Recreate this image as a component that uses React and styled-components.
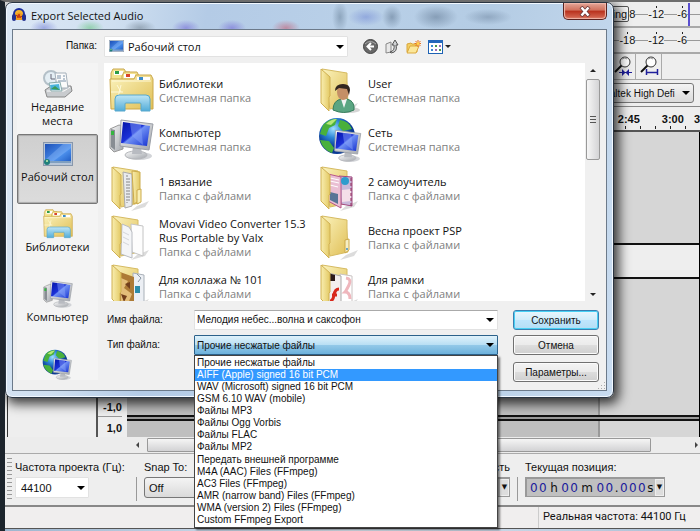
import React, { useState } from 'react'
import styled, { createGlobalStyle, css } from 'styled-components'

const GlobalStyle = createGlobalStyle`
    * {
        box-sizing: border-box;
    }
    body {
        margin: 0;
        background: #eeeeee;
        font-family: 'Liberation Sans', Arial, sans-serif;
        font-size: 11px;
        color: #111;
    }
    button, select, input {
        font: inherit;
        color: inherit;
        margin: 0;
    }
`

const segoe = css`
    font-family: 'Open Sans', 'Noto Sans', sans-serif;
    font-size: 11px;
`

/* ---------- main window ---------- */

const Desktop = styled.div`
    position: relative;
    display: flex;
    flex-direction: column;
    min-height: 100vh;
    overflow: hidden;
    border-left: 5px solid #1c242c;
    border-top: 2px solid #6d6d6d;
    background: #eeeeee;
`

const Meter = styled.div`
    position: relative;
    display: flex;
    justify-content: flex-end;
    align-items: center;
    gap: 13px;
    height: 26px;
    padding-right: 13px;
    border-bottom: 2px solid #a9a9a9;
    background: linear-gradient(#eee 12px, #999 12px, #999 13px, #eee 13px);
`

const Level = styled.span`
    display: flex;
    align-items: center;
    line-height: 16px;
    background:
        linear-gradient(#222, #222) 50% 0 / 1px 2px no-repeat,
        #eee;
`

const PeakLine = styled.i`
    position: absolute;
    right: 10px;
    top: 1px;
    bottom: 0;
    width: 2px;
    background: #5a4fd0;
`

const MeterHint = styled.span`
    padding: 0 1px;
    line-height: 14px;
    border: 1px solid #555;
    border-radius: 2px;
    background: #f6f6f6;
`

const ZoomTools = styled.div`
    display: flex;
    justify-content: flex-end;
    height: 26px;
    padding-right: 38px;
    border-bottom: 1px solid #aaa;
`

const ZoomButton = styled.button`
    width: 26px;
    padding: 2px;
    border: 0;
    border-right: 1px solid #aaa;
    background: #eee;
`

const DeviceBar = styled.div`
    display: flex;
    justify-content: flex-end;
    align-items: center;
    height: 27px;
    padding-right: 6px;
    font-size: 10px;
    border-bottom: 1px solid #888;
`

const flatSelect = css`
    appearance: none;
    outline: 0;
    border: 1px solid #777;
    border-radius: 3px;
    padding: 0 4px;
    background: linear-gradient(#f4f4f4, #dadada);
`

const Picker = styled.span`
    position: relative;
    display: flex;
    width: ${p => p.$width || '100%'};
    height: ${p => p.$height || 20}px;

    select,
    input {
        width: 100%;
        ${flatSelect}
    }
    &::after {
        content: '';
        position: absolute;
        right: 4px;
        top: calc(50% - 2px);
        border: 4px solid transparent;
        border-top-color: #000;
        border-bottom: 0;
        pointer-events: none;
    }
`

const PlainPicker = styled(Picker)`
    select,
    input {
        border: 1px solid #e2e2e2;
        border-radius: 1px;
        background: #fff;
        padding: 0 5px;
    }
`

const Ruler = styled.div`
    display: flex;
    justify-content: flex-end;
    gap: 22px;
    height: 25px;
    padding-top: 6px;
    font-size: 11px;
    font-weight: bold;
    line-height: 12px;
    border-bottom: 2px solid #555;
    background:
        repeating-linear-gradient(to right, #222 0 1px, transparent 1px 15px) 5px 19px / 100% 3px no-repeat,
        #eee;

    span:last-child {
        margin-left: -12px;
    }
`

const Tracks = styled.div`
    display: flex;
    flex: 1;
    border-right: 1px solid #000;
`

const TrackPanel = styled.div`
    width: 93px;
    border-left: 2px solid #eee;
    border-right: 2px solid #555;
    box-shadow: inset 1px 0 #333;
    background: #eee;
`

const Scale = styled.div`
    display: flex;
    flex-direction: column;
    justify-content: flex-end;
    width: 29px;
    padding-right: 5px;
    font-size: 11px;
    font-weight: bold;
    text-align: right;
    background: #eee;

    span {
        line-height: 16px;
        height: 21px;
        padding-top: 3px;
        border-top: 1px solid #999;
    }
`

const Waves = styled.div`
    display: flex;
    flex-direction: column;
    flex: 1;
`

const Channel = styled.div`
    flex: ${p => p.$grow};
    min-height: 16px;
    background: linear-gradient(
        to right,
        #bfbfbf calc(100% - 101px),
        #999 calc(100% - 101px),
        #999 calc(100% - 99px),
        #d6d6d6 calc(100% - 99px)
    );
`

const Divider = styled.div`
    height: ${p => p.$size}px;
    border: solid #111;
    border-width: 2px 0;
    background: ${p => p.$fill};
`

const HScroll = styled.div`
    display: flex;
    align-items: center;
    gap: 8px;
    height: 17px;
    padding: 0 2px 0 131px;
    border-bottom: 1px solid #aaa;
    background: #ececec;
`

const HThumb = styled.div`
    flex: 1;
    height: 14px;
    margin-right: 36px;
    border: 1px solid #999;
    border-radius: 1px;
    background: linear-gradient(#f5f5f5, #d2d2d4);
`

const BottomBar = styled.div`
    display: flex;
    gap: 7px;
    height: 53px;
    padding: 4px 0 4px 2px;
    border-bottom: 2px solid #888;
`

const Grip = styled.div`
    width: 5px;
    margin-right: -4px;
    background: repeating-linear-gradient(#999 0 1px, transparent 1px 4px);
`

const Field = styled.label`
    display: flex;
    flex-direction: column;
    gap: 3px;
    padding-top: 2px;
    line-height: 14px;
    flex: ${p => p.$flex || 'none'};
    text-align: ${p => p.$align || 'left'};
    white-space: nowrap;
`

const Split = styled.div`
    align-self: flex-end;
    height: 24px;
    border-left: 1px solid #999;
`

const TimeBox = styled.div`
    display: flex;
    align-items: center;
    justify-content: space-between;
    height: 20px;
    width: ${p => p.$width || 'auto'};
    padding-left: 3px;
    border: 2px solid #999;
    border-right-width: 1px;
    border-bottom-width: 1px;
    background: #c0c0c0;
    font-family: 'DejaVu Sans', sans-serif;
    font-size: 12px;

    b {
        font-weight: normal;
        color: #1a1a9c;
    }
    i {
        margin: 0 2px;
        font-style: normal;
    }
    button {
        align-self: stretch;
        width: 9px;
        padding: 0;
        border: 1px solid #eee;
        background: #ddd;
        font-size: 7px;
        line-height: 7px;
    }
`

const StatusBar = styled.footer`
    display: flex;
    justify-content: flex-end;
    height: 21px;
    font-family: Roboto, 'Open Sans', sans-serif;
    line-height: 20px;
    background: #f0eeee;

    span {
        width: 162px;
        padding-left: 4px;
        border-left: 1px solid #ccc;
    }
`

const WindowEdge = styled.div`
    height: 3px;
    border-top: 1px solid #555;
    background: linear-gradient(to right, #9eb6cf, #dfe9f4, #a9bdd3);
`

/* ---------- dialog ---------- */

const Dialog = styled.section`
    position: absolute;
    left: 0;
    top: 0;
    width: calc(100% - 86px);
    padding: 0 6px 6px;
    border: 1px solid #2a3542;
    border-radius: 7px;
    font-size: 10px;
    background:
        radial-gradient(ellipse 14px 8px at 38px 25px, #7f8bd8aa, transparent),
        radial-gradient(ellipse 14px 8px at 84px 25px, #76c890aa, transparent),
        radial-gradient(ellipse 16px 8px at 134px 25px, #8090a0aa, transparent),
        radial-gradient(ellipse 14px 8px at 180px 25px, #7a75d8aa, transparent),
        radial-gradient(ellipse 14px 8px at 226px 25px, #7a75d8aa, transparent),
        radial-gradient(ellipse 14px 8px at 280px 25px, #c06a80aa, transparent),
        radial-gradient(ellipse 8px 16px at 334px 14px, #7890a8aa, transparent),
        radial-gradient(ellipse 18px 9px at 360px 14px, #7f96d8aa, transparent),
        radial-gradient(ellipse 10px 12px at 386px 14px, #6f86a0aa, transparent),
        radial-gradient(ellipse 22px 12px at 430px 14px, #6f86a0aa, transparent),
        radial-gradient(ellipse 24px 8px at 482px 14px, #7f96b0aa, transparent),
        linear-gradient(100deg, #dce8f5 0, #cfdff0 110px, #b4cbe6 200px, #b9d0e8 340px, #b4cce4 480px, #c9dcf0 100%);
    box-shadow:
        inset 0 0 0 1px #f2f8ff,
        3px 4px 12px 2px rgba(0, 0, 0, 0.75);
`

const TitleBar = styled.header`
    ${segoe}
    display: flex;
    align-items: flex-start;
    height: 26px;

    h1 {
        flex: 1;
        margin: 5px 0 0 5px;
        font-size: 11px;
        font-weight: normal;
        line-height: 16px;
    }
    > svg {
        margin-top: 5px;
    }
`

const CloseButton = styled.button`
    display: grid;
    place-items: center;
    width: 44px;
    height: 17px;
    padding: 0;
    border: 1px solid #5a2320;
    border-top: 0;
    border-radius: 0 0 5px 5px;
    box-shadow: inset 0 0 1px 1px #f0b8ab;
    background: linear-gradient(#e3a698, #d0705c 45%, #b8301c 50%, #d8705a);
`

const Body = styled.div`
    display: grid;
    grid-template-columns: 81px minmax(0, 1fr);
    column-gap: 6px;
    row-gap: 6px;
    padding: 6px 6px 8px 4px;
    border: 1px solid #6c7a8a;
    background: #f0f0f0;
`

const LookLabel = styled.label`
    padding-right: 1px;
    text-align: right;
    line-height: 20px;
`

const LookRow = styled.div`
    display: flex;
    align-items: center;
    gap: 7px;
    height: 21px;
`

const FolderPicker = styled(PlainPicker)`
    margin-right: 8px;

    select {
        ${segoe}
        padding-left: 23px;
    }
    svg {
        position: absolute;
        left: 5px;
        top: 4px;
    }
`

const ToolButton = styled.button`
    display: flex;
    align-items: center;
    gap: 2px;
    padding: 0;
    border: 0;
    background: none;
`

const Places = styled.nav`
    ${segoe}
    height: 317px;
    padding-top: 1px;
    overflow: hidden;
    background: #f4f4f4;
`

const Place = styled.button`
    display: flex;
    flex-direction: column;
    align-items: center;
    gap: 1px;
    width: 100%;
    height: 70px;
    padding: 4px 0 0;
    border: 1px solid transparent;
    border-radius: 2px;
    background: none;
    line-height: 14px;

    ${p =>
        p.$active &&
        css`
            border-color: #777;
            background: linear-gradient(#cfcfcf, #dcdcdc);
            box-shadow: inset 0 0 1px 1px #aaa;
        `}
`

const PlaceIcon = styled.span`
    display: grid;
    place-items: center;
    height: 30px;
`

const Right = styled.div`
    display: flex;
    flex-direction: column;
    gap: 9px;
`

const FileArea = styled.div`
    ${segoe}
    display: flex;
    height: 238px;
    overflow: hidden;
    background: #fff;
`

const Files = styled.ul`
    flex: 1;
    display: grid;
    grid-template-columns: repeat(2, 209px);
    grid-auto-rows: 49px;
    margin: 0;
    padding: 3px 0 0 5px;
    list-style: none;
`

const FileItem = styled.li`
    display: flex;
    align-items: center;
    gap: 5px;
    line-height: 14px;

    svg {
        flex: none;
    }
    small {
        display: block;
        font-size: 11px;
        color: #808080;
    }
`

const Scrollbar = styled.div`
    display: flex;
    flex-direction: column;
    align-items: center;
    justify-content: space-between;
    width: 15px;
    padding: 6px 0 5px;
    background: #f0f0f0;
`

const Thumb = styled.div`
    display: grid;
    place-items: center;
    width: 14px;
    height: 81px;
    margin-bottom: auto;
    margin-top: 7px;
    border: 1px solid #999;
    border-radius: 2px;
    background: linear-gradient(to right, #f6f6f6, #d4d4d6);

    &::after {
        content: '';
        width: 6px;
        height: 8px;
        background: repeating-linear-gradient(#555 0 1px, transparent 1px 3px);
    }
`

const Arrow = styled.i`
    border: 3px solid transparent;
    ${p => (p.$up ? 'border-bottom-color: #222; border-top: 0;' : '')}
    ${p => (p.$down ? 'border-top-color: #222; border-bottom: 0;' : '')}
    ${p => (p.$left ? 'border-right-color: #444; border-left: 0;' : '')}
    ${p => (p.$right ? 'border-left-color: #444; border-right: 0;' : '')}
`

const Form = styled.div`
    display: flex;
    gap: 15px;
    padding: 0 1px 0 3px;
`

const Lines = styled.div`
    flex: 1;
    display: flex;
    flex-direction: column;
    gap: 5px;
`

const Line = styled.div`
    position: relative;
    display: grid;
    grid-template-columns: 87px minmax(0, 1fr);
    line-height: 20px;
`

const NamePicker = styled(PlainPicker)`
    input {
        padding: 0 2px;
        border-top-color: #aaa;
    }
`

const TypePicker = styled(Picker)`
    select {
        padding: 0 2px;
        border: 1px solid #2c628b;
        border-radius: 1px;
        background: linear-gradient(#e0f2fb, #b9dff4 48%, #92c8e8 52%, #6db2dc);
    }
`

const Menu = styled.ul`
    position: absolute;
    z-index: 1;
    left: 87px;
    right: 0;
    top: 100%;
    display: grid;
    grid-auto-rows: 1fr;
    height: 173px;
    margin: 0;
    padding: 1px 0;
    list-style: none;
    line-height: 12px;
    border: 1px solid #444;
    background: #fff;
    box-shadow: 2px 2px 2px rgba(0, 0, 0, 0.5);
`

const MenuItem = styled.li`
    padding-left: 2px;
    ${p => p.$active && 'background: #3399ff; color: #fff;'}
`

const Actions = styled.div`
    display: flex;
    flex-direction: column;
    gap: 5px;
    width: 86px;
`

const Action = styled.button`
    height: 20px;
    padding: 0;
    border: 1px solid #707070;
    border-radius: 3px;
    box-shadow: inset 0 0 0 1px #fbfbfb;
    background: linear-gradient(#f3f3f3, #ebebeb 48%, #dddddd 52%, #cfcfcf);

    &:last-child {
        margin-top: 2px;
    }
    ${p =>
        p.$primary &&
        css`
            border-color: #3c7fb1;
            box-shadow: inset 0 0 0 1px #48d0f4;
            background: linear-gradient(#eaf6fd, #d2edfa 48%, #bee6fd 52%, #b4def5);
        `}
`

/* ---------- icons ---------- */

const Gradients = () => (
    <svg width="0" height="0" style={{ position: 'absolute' }} aria-hidden="true">
        <defs>
            <linearGradient id="paper" x2="1" y2="1">
                <stop offset="0" stopColor="#fbf3bd" />
                <stop offset="1" stopColor="#e0bf56" />
            </linearGradient>
            <linearGradient id="flap" x2="1" y2="0">
                <stop offset="0" stopColor="#f9eeb0" />
                <stop offset="1" stopColor="#e3c964" />
            </linearGradient>
            <linearGradient id="stand" y2="1" x2="0">
                <stop offset="0" stopColor="#bfe6f6" />
                <stop offset="1" stopColor="#52acd8" />
            </linearGradient>
            <linearGradient id="screen" x2="1" y2="1">
                <stop offset="0" stopColor="#0414a8" />
                <stop offset=".45" stopColor="#1c32d8" />
                <stop offset=".5" stopColor="#6f90f4" />
                <stop offset="1" stopColor="#1430d0" />
            </linearGradient>
            <linearGradient id="wall" x2="1" y2="1">
                <stop offset="0" stopColor="#1c50b8" />
                <stop offset=".6" stopColor="#4c90ec" />
                <stop offset="1" stopColor="#1d58c0" />
            </linearGradient>
            <linearGradient id="metal" x2="1" y2="1">
                <stop offset="0" stopColor="#fafafa" />
                <stop offset="1" stopColor="#a2a6ac" />
            </linearGradient>
            <radialGradient id="ball" cx=".4" cy=".3">
                <stop offset="0" stopColor="#9fe0ff" />
                <stop offset=".5" stopColor="#2c86d8" />
                <stop offset="1" stopColor="#0b3a94" />
            </radialGradient>
        </defs>
    </svg>
)

const LibraryIcon = ({ size = 45 }) => (
    <svg width={size} height={size} viewBox="0 0 45 45">
        <path d="M2 5l2-4h11l2 3h4v8H2z" fill="#f4e390" stroke="#c8a850" />
        <path d="M5 3h9l2 4H5z" fill="#fff" />
        <rect x="6" y="3" width="4" height="3" fill="#2e9c48" />
        <path d="M13 8l2-4h13l2 4v6H13z" fill="#f4e390" stroke="#c8a850" />
        <path d="M15 6h11v4H15z" fill="#fff" />
        <rect x="17" y="6" width="4" height="3" fill="#d8452c" />
        <path d="M1 11h24l2-4h15l2 4v30H2z" fill="url(#paper)" stroke="#cba84a" />
        <path d="M28 9h13v3H28z" fill="#fff" />
        <rect x="30" y="9" width="4" height="3" fill="#3c8cc8" />
        <path d="M3 13h39M8 17l4 7M2 24l12 0M12 17l-3 12" stroke="#fff9d8" fill="none" />
        <path d="M6 43V31q0-4 4-4h27q4 0 4 4v12h-9v-7q0-1-1-1H17q-1 0-1 1v7z" fill="url(#stand)" stroke="#58a8cc" />
    </svg>
)

const Monitor = () => (
    <g>
        <ellipse cx="30" cy="39" rx="13" ry="4" fill="#d2d4d8" />
        <ellipse cx="27" cy="38" rx="11" ry="4" fill="url(#metal)" stroke="#b4b6ba" />
        <path d="M24 29l8 1 1 7H23z" fill="#b8bbc1" />
        <path d="M12 3l32 4-4 26-29-4z" fill="url(#metal)" stroke="#9a9ea6" />
        <path d="M14 5l27 4-3 20-26-3z" fill="url(#screen)" />
        <path d="M21 6l11 1 2 21-11-9z" fill="#8ba6fa" opacity=".45" />
    </g>
)

const ComputerIcon = ({ size = 45 }) => (
    <svg width={size} height={size} viewBox="0 0 45 45">
        <path d="M1 12l9-4 4 1v23L5 35l-4-4z" fill="url(#metal)" stroke="#999" />
        <path d="M2 12l4 1v20l-4-3z" fill="#888d93" />
        <rect x="2" y="14" width="3" height="4" fill="#35b540" />
        <Monitor />
    </svg>
)

const NetworkIcon = ({ size = 45 }) => (
    <svg width={size} height={size} viewBox="0 0 45 45">
        <circle cx="19" cy="19" r="18" fill="url(#ball)" />
        <path d="M5 8q6-7 14-6l-2 6-6 3-3 8-6-2zM22 3q9 1 12 9l-9 2-5-5zM2 23l9 1 5 7-2 5Q5 33 2 23z" fill="#49b03c" />
        <path d="M8 7q5-5 11-5l-6 6z" fill="#b6e878" />
        <g transform="translate(8 11) scale(.79)">
            <Monitor />
        </g>
    </svg>
)

const DesktopIcon = ({ width = 30, height = 24 }) => (
    <svg width={width} height={height} viewBox="0 0 30 24">
        <rect x=".5" y=".5" width="29" height="23" fill="#b8c6d8" stroke="#8897ab" />
        <rect x="2" y="2" width="26" height="19" fill="url(#wall)" />
        <path d="M2 18L20 2h8v4L8 21H2z" fill="#a8ccff" opacity=".3" />
        <rect x="2" y="19" width="26" height="2" fill="#7f9fc0" />
        <circle cx="4" cy="20" r="3" fill="#1f7f7a" />
        <circle cx="4" cy="19" r="1" fill="#c8f0b0" />
    </svg>
)

const RecentIcon = () => (
    <svg width="30" height="28" viewBox="0 0 30 28">
        <path d="M2 20l6-4h20l1 5-7 6H4z" fill="#c8cbce" stroke="#888" />
        <path d="M4 21h17l6-4" stroke="#fff" fill="none" />
        <circle cx="8" cy="8" r="7" fill="#e4eef4" stroke="#b4c0c8" strokeWidth="2" />
        <path d="M8 4v5h4" stroke="#667" fill="none" />
        <path d="M12 3h11l2 15H14z" fill="#fbfbfb" stroke="#a5b0ba" />
        <path d="M14 6h4M14 8h4M20 6h2M20 9h2M15 11h8" stroke="#7890a8" />
        <path d="M6 13l11-1 2 9H8z" fill="#e8f6fc" stroke="#8aa" />
        <path d="M7 15l9-1 1 6H8z" fill="#49b3dc" />
        <path d="M8 19l4-3 5 4z" fill="#3c9a58" />
    </svg>
)

const contents = {
    docs: (
        <g>
            <path d="M14 6l9 2v32l-7 2z" fill="#e9ebee" stroke="#aaa" />
            <path d="M18 9v28M20 12v24" stroke="#888" strokeDasharray="2 1" />
            <path d="M23 5l8 1v28l-6 4z" fill="url(#flap)" stroke="#ccab4c" />
            <path d="M28 24l4-1v13l-4 2z" fill="#f9efb5" stroke="#ccab4c" />
        </g>
    ),
    pages: (
        <g>
            <path d="M22 9l12 2v30l-11-4z" fill="#fdfdfd" stroke="#c4c4c4" />
            <path d="M13 9l7 3 3 5v26l-11-4z" fill="#f4f5f7" stroke="#b9bcc2" />
            <path d="M14 17l6 3M14 22l6 3M14 27l6 3" stroke="#d4d6da" />
        </g>
    ),
    collage: (
        <g>
            <path d="M24 9l11 2v32H24z" fill="#eceff4" stroke="#a9b0b8" />
            <path d="M11 8l14 5v31H11z" fill="#ad7a35" />
            <path d="M12 14l7 3-4 7 8 6-5 12-6-5z" fill="#e3bd79" />
            <path d="M16 20l5-2v7zM12 30l6 2-3 6z" fill="#713e1c" />
            <path d="M26 22h5v7h-5z" fill="#2d8ca8" />
            <path d="M28 10l4 4-3 4" stroke="#8a96a2" fill="none" />
        </g>
    ),
    tutorial: (
        <g>
            <path d="M21 10l13 1v29l-11-2z" fill="#c9b9da" stroke="#a24a80" />
            <path d="M10 8l13 3v31l-13-7z" fill="#eabfd3" stroke="#b85888" />
            <path d="M12 12l9 2M12 15l9 2M12 19l8 2" stroke="#fff" />
            <circle cx="27" cy="15" r="4" fill="#2e9ccd" />
            <path d="M12 26l8 2v10l-8-4z" fill="#587596" />
            <path d="M24 24l9-1v12l-9 1z" fill="#f5dfe9" />
            <path d="M33 12v28" stroke="#8d2355" strokeDasharray="3 2" />
        </g>
    ),
    frames: (
        <g>
            <path d="M22 10l12 2v31H22z" fill="#fff" stroke="#c9c2c2" />
            <path d="M28 14q6 1 3 7t-4 7q5 0 5 7" stroke="#efb7bd" fill="none" strokeWidth="3" />
            <path d="M10 9l13 3v32H10z" fill="#f3eeee" stroke="#aaa" />
            <path d="M10 9l7 2v6h-7z" fill="#2c1a1a" />
            <path d="M12 37q3 0 4-6t5-6m-7 6h5" stroke="#d8281c" fill="none" strokeWidth="3" />
        </g>
    ),
    user: (
        <g>
            <ellipse cx="32" cy="42" rx="10" ry="3" fill="#d5d5d5" />
            <path d="M15 42q0-10 9-11h5q8 2 7 11-10 5-21 0z" fill="#5aa582" stroke="#377d5c" />
            <path d="M23 31l3 9 3-9z" fill="#f1f3f3" />
            <ellipse cx="25" cy="24" rx="6" ry="8" fill="#c58f66" />
            <path d="M17 23q0-7 8-7 7 0 7 6l-1 5-2-6-8-1z" fill="#33261f" />
        </g>
    ),
}

const FolderIcon = ({ kind }) => (
    <svg width="45" height="45" viewBox="0 0 45 45">
        <path d="M28 40l12-5-4 6-14 4z" fill="#dcdcdc" />
        <path d="M4 1l25 4v8l1 24-18 4z" fill="url(#paper)" stroke="#d6bb62" />
        {kind !== 'user' && contents[kind]}
        {!kind && <path d="M27 25l4-1v11l-4 3z" fill="#f7efc4" stroke="#cba84a" />}
        {!kind && <circle cx="29" cy="34" r="1" fill="#3c8cc8" />}
        <path d="M3 1l9 8v19l-1 1v14l-8-8z" fill="url(#flap)" stroke="#d0b053" />
        {kind === 'user' && contents.user}
    </svg>
)

const HeadphonesIcon = () => (
    <svg width="14" height="14" viewBox="0 0 14 14">
        <path d="M2 8V6a5 5 0 0110 0v2" fill="#f6b42c" stroke="#1b2c9c" strokeWidth="2" />
        <path d="M4 6q3-3 6 0v6H4z" fill="#f39a1c" />
        <path d="M4 8l1-1 1 3 1-4 1 4 1-2 1 1" stroke="#c23412" fill="none" />
        <rect y="6" width="4" height="7" rx="2" fill="#24318f" />
        <rect x="10" y="6" width="4" height="7" rx="2" fill="#24318f" />
    </svg>
)

const CloseIcon = () => (
    <svg width="12" height="11" viewBox="0 0 12 11">
        <path d="M2 1l8 9M10 1l-8 9" stroke="#6b3a3a" strokeWidth="4" />
        <path d="M2.500 1.500l7 8M9.500 1.500l-7 8" stroke="#fff" strokeWidth="2.500" />
    </svg>
)

const BackIcon = () => (
    <svg width="15" height="15" viewBox="0 0 15 15">
        <circle cx="7.5" cy="7.5" r="7" fill="#686868" stroke="#444" />
        <path d="M2 5q5-5 11 0" stroke="#aaa" fill="none" />
        <path d="M11 7.5H5M8 4L4.500 7.500 8 11" stroke="#fff" strokeWidth="2" fill="none" />
    </svg>
)

const UpIcon = () => (
    <svg width="14" height="15" viewBox="0 0 14 15">
        <path d="M1 5l5-2v10l-5 1z" fill="#e8e8e8" stroke="#888" />
        <path d="M5 13q5-1 4-7H7l3-5 3 5h-2q2 7-5 8z" fill="#d0d2d4" stroke="#555" />
    </svg>
)

const NewFolderIcon = () => (
    <svg width="15" height="14" viewBox="0 0 15 14">
        <path d="M1 12V4l4-1 1 1h5v8z" fill="#f3cf62" stroke="#d9a63c" />
        <path d="M1 13l3-7h9l-3 7z" fill="#fbe79a" stroke="#dba93f" />
        <path d="M12 0v7M8.500 3.500h7M9.500 1l5 5M14.500 1l-5 5" stroke="#e8701c" />
        <circle cx="12" cy="3.500" r="1.500" fill="#ffd24a" />
    </svg>
)

const ViewIcon = () => (
    <svg width="15" height="14" viewBox="0 0 15 14">
        <rect x=".5" y=".5" width="14" height="13" fill="#fff" stroke="#1e62b4" />
        <rect width="15" height="3" fill="#2468bc" />
        <path d="M3 5h2v2H3zM3 9h2v2H3z" fill="#3a8ad0" />
        <path d="M7 5h2v2H7zM11 9h2v2h-2z" fill="#4a9a4a" />
        <path d="M11 5h2v2h-2zM7 9h2v2H7z" fill="#9c6ab8" />
    </svg>
)

const MagnifierIcon = ({ full }) => (
    <svg width="20" height="20" viewBox="0 0 20 20">
        <circle cx="12" cy="6" r="5" fill="#fff" stroke="#333" />
        <path d="M9 3q3-2 5 0" stroke="#999" fill="none" />
        <path d="M8.500 9.500L2 16" stroke="#111" strokeWidth="2" />
        {full ? (
            <path d="M7.500 13v6M18.500 13v6M7 16.500h12" stroke="#20209c" strokeWidth="1.500" fill="none" />
        ) : (
            <g fill="#20209c">
                <path d="M6 16h13v1H6z" />
                <path d="M9 13l3.500 3.500L9 20zM16 13l-3.500 3.500L16 20z" />
            </g>
        )}
    </svg>
)

const SizeGrip = styled.div`
    position: absolute;
    right: 8px;
    bottom: 8px;
    width: 8px;
    height: 8px;
    background: radial-gradient(circle, #aaa 1px, transparent 1px) 0 0 / 3px 3px;
    clip-path: polygon(100% 0, 100% 100%, 0 100%);
`

/* ---------- data ---------- */

const places = [
    { name: 'Недавние места', icon: <RecentIcon /> },
    { name: 'Рабочий стол', icon: <DesktopIcon />, active: true },
    { name: 'Библиотеки', icon: <LibraryIcon size={30} /> },
    { name: 'Компьютер', icon: <ComputerIcon size={30} /> },
    { name: '', icon: <NetworkIcon size={31} /> },
]

const files = [
    ['Библиотеки', 'Системная папка', <LibraryIcon />],
    ['User', 'Системная папка', <FolderIcon kind="user" />],
    ['Компьютер', 'Системная папка', <ComputerIcon />],
    ['Сеть', 'Системная папка', <NetworkIcon />],
    ['1 вязание', 'Папка с файлами', <FolderIcon kind="docs" />],
    ['2 самоучитель', 'Папка с файлами', <FolderIcon kind="tutorial" />],
    ['Movavi Video Converter 15.3 Rus Portable by Valx', 'Папка с файлами', <FolderIcon kind="pages" />],
    ['Весна проект PSP', 'Папка с файлами', <FolderIcon />],
    ['Для коллажа № 101', 'Папка с файлами', <FolderIcon kind="collage" />],
    ['Для рамки', 'Папка с файлами', <FolderIcon kind="frames" />],
]

const types = [
    'Прочие несжатые файлы',
    'AIFF (Apple) signed 16 bit PCM',
    'WAV (Microsoft) signed 16 bit PCM',
    'GSM 6.10 WAV (mobile)',
    'Файлы MP3',
    'Файлы Ogg Vorbis',
    'Файлы FLAC',
    'Файлы MP2',
    'Передать внешней программе',
    'M4A (AAC) Files (FFmpeg)',
    'AC3 Files (FFmpeg)',
    'AMR (narrow band) Files (FFmpeg)',
    'WMA (version 2) Files (FFmpeg)',
    'Custom FFmpeg Export',
]

const ExportDialog = () => {
    const [type, setType] = useState(types[0])
    const [hovered, setHovered] = useState(types[1])
    const [open, setOpen] = useState(true)
    return (
        <Dialog role="dialog" aria-labelledby="title">
            <TitleBar>
                <HeadphonesIcon />
                <h1 id="title">Export Selected Audio</h1>
                <CloseButton aria-label="Закрыть">
                    <CloseIcon />
                </CloseButton>
            </TitleBar>
            <Body>
                <LookLabel htmlFor="folder">Папка:</LookLabel>
                <LookRow>
                    <FolderPicker $width="244px" $height={21}>
                        <select id="folder">
                            <option>Рабочий стол</option>
                        </select>
                        <DesktopIcon width={15} height={12} />
                    </FolderPicker>
                    <ToolButton aria-label="Назад">
                        <BackIcon />
                    </ToolButton>
                    <ToolButton aria-label="Вверх">
                        <UpIcon />
                    </ToolButton>
                    <ToolButton aria-label="Новая папка">
                        <NewFolderIcon />
                    </ToolButton>
                    <ToolButton aria-label="Вид">
                        <ViewIcon />
                        <Arrow $down />
                    </ToolButton>
                </LookRow>
                <Places>
                    {places.map(({ name, icon, active }) => (
                        <Place key={name} $active={active} aria-label={name || 'Сеть'}>
                            <PlaceIcon>{icon}</PlaceIcon>
                            {name}
                        </Place>
                    ))}
                </Places>
                <Right>
                    <FileArea>
                        <Files>
                            {files.map(([name, kind, icon]) => (
                                <FileItem key={name}>
                                    {icon}
                                    <div>
                                        {name}
                                        <small>{kind}</small>
                                    </div>
                                </FileItem>
                            ))}
                        </Files>
                        <Scrollbar>
                            <Arrow $up />
                            <Thumb />
                            <Arrow $down />
                        </Scrollbar>
                    </FileArea>
                    <Form>
                        <Lines>
                            <Line>
                                <label htmlFor="name">Имя файла:</label>
                                <NamePicker>
                                    <input id="name" defaultValue="Мелодия небес...волна и саксофон" />
                                </NamePicker>
                            </Line>
                            <Line>
                                <label htmlFor="type">Тип файла:</label>
                                <TypePicker>
                                    <select
                                        id="type"
                                        value={type}
                                        onChange={e => setType(e.target.value)}
                                        onMouseDown={e => {
                                            e.preventDefault()
                                            setOpen(!open)
                                        }}
                                    >
                                        {types.map(name => (
                                            <option key={name}>{name}</option>
                                        ))}
                                    </select>
                                </TypePicker>
                                {open && (
                                    <Menu role="listbox" aria-label="Тип файла">
                                        {types.map(name => (
                                            <MenuItem
                                                key={name}
                                                role="option"
                                                aria-selected={name === hovered}
                                                $active={name === hovered}
                                                onMouseEnter={() => setHovered(name)}
                                                onClick={() => {
                                                    setType(name)
                                                    setOpen(false)
                                                }}
                                            >
                                                {name}
                                            </MenuItem>
                                        ))}
                                    </Menu>
                                )}
                            </Line>
                        </Lines>
                        <Actions>
                            <Action $primary>Сохранить</Action>
                            <Action>Отмена</Action>
                            <Action>Параметры...</Action>
                        </Actions>
                    </Form>
                </Right>
            </Body>
            <SizeGrip />
        </Dialog>
    )
}

const App = () => (
    <Desktop>
        <GlobalStyle />
        <Gradients />
        <Meter>
            <Level>
                <MeterHint>ring</MeterHint>8
            </Level>
            <Level>-12</Level>
            <Level>-6</Level>
            <PeakLine />
        </Meter>
        <Meter>
            <Level>-18</Level>
            <Level>-12</Level>
            <Level>-6</Level>
        </Meter>
        <ZoomTools>
            <ZoomButton aria-label="Уместить выделенное">
                <MagnifierIcon />
            </ZoomButton>
            <ZoomButton aria-label="Уместить проект">
                <MagnifierIcon full />
            </ZoomButton>
        </ZoomTools>
        <DeviceBar>
            <Picker $width="102px">
                <select aria-label="Устройство">
                    <option>Realtek High Defi</option>
                </select>
            </Picker>
        </DeviceBar>
        <Ruler>
            <span>2:45</span>
            <span>3:00</span>
            <span>3</span>
        </Ruler>
        <Tracks>
            <TrackPanel />
            <Scale>
                <span>-1,0</span>
                <span>1,0</span>
            </Scale>
            <Waves>
                <Channel $grow={110} />
                <Divider $size={36} $fill="#eee" />
                <Channel $grow={134} />
                <Divider $size={6} $fill="#999" />
                <Channel $grow={0} />
            </Waves>
        </Tracks>
        <HScroll>
            <Arrow $left />
            <HThumb />
            <Arrow $right />
        </HScroll>
        <BottomBar>
            <Grip />
            <Field $flex="0 0 114px">
                Частота проекта (Гц):
                <PlainPicker $width="74px" $height={21}>
                    <select>
                        <option>44100</option>
                    </select>
                </PlainPicker>
            </Field>
            <Split />
            <Field>
                Snap To:
                <Picker $width="90px" $height={21}>
                    <select>
                        <option>Off</option>
                    </select>
                </Picker>
            </Field>
            <Field as="div" $flex="1" $align="right">
                Длительность
                <TimeBox>
                    <b />
                    <button aria-label="Формат времени">▼</button>
                </TimeBox>
            </Field>
            <Split />
            <Field as="div" $flex="0 0 175px">
                Текущая позиция:
                <TimeBox $width="140px">
                    <b>0</b>
                    <b>0</b>
                    <i>h</i>
                    <b>0</b>
                    <b>0</b>
                    <i>m</i>
                    <b>0</b>
                    <b>0</b>
                    <span>.</span>
                    <b>0</b>
                    <b>0</b>
                    <b>0</b>
                    <span>s</span>
                    <button aria-label="Формат времени">▼</button>
                </TimeBox>
            </Field>
        </BottomBar>
        <StatusBar>
            <span>Реальная частота: 44100 Гц</span>
        </StatusBar>
        <WindowEdge />
        <ExportDialog />
    </Desktop>
)

export default App
